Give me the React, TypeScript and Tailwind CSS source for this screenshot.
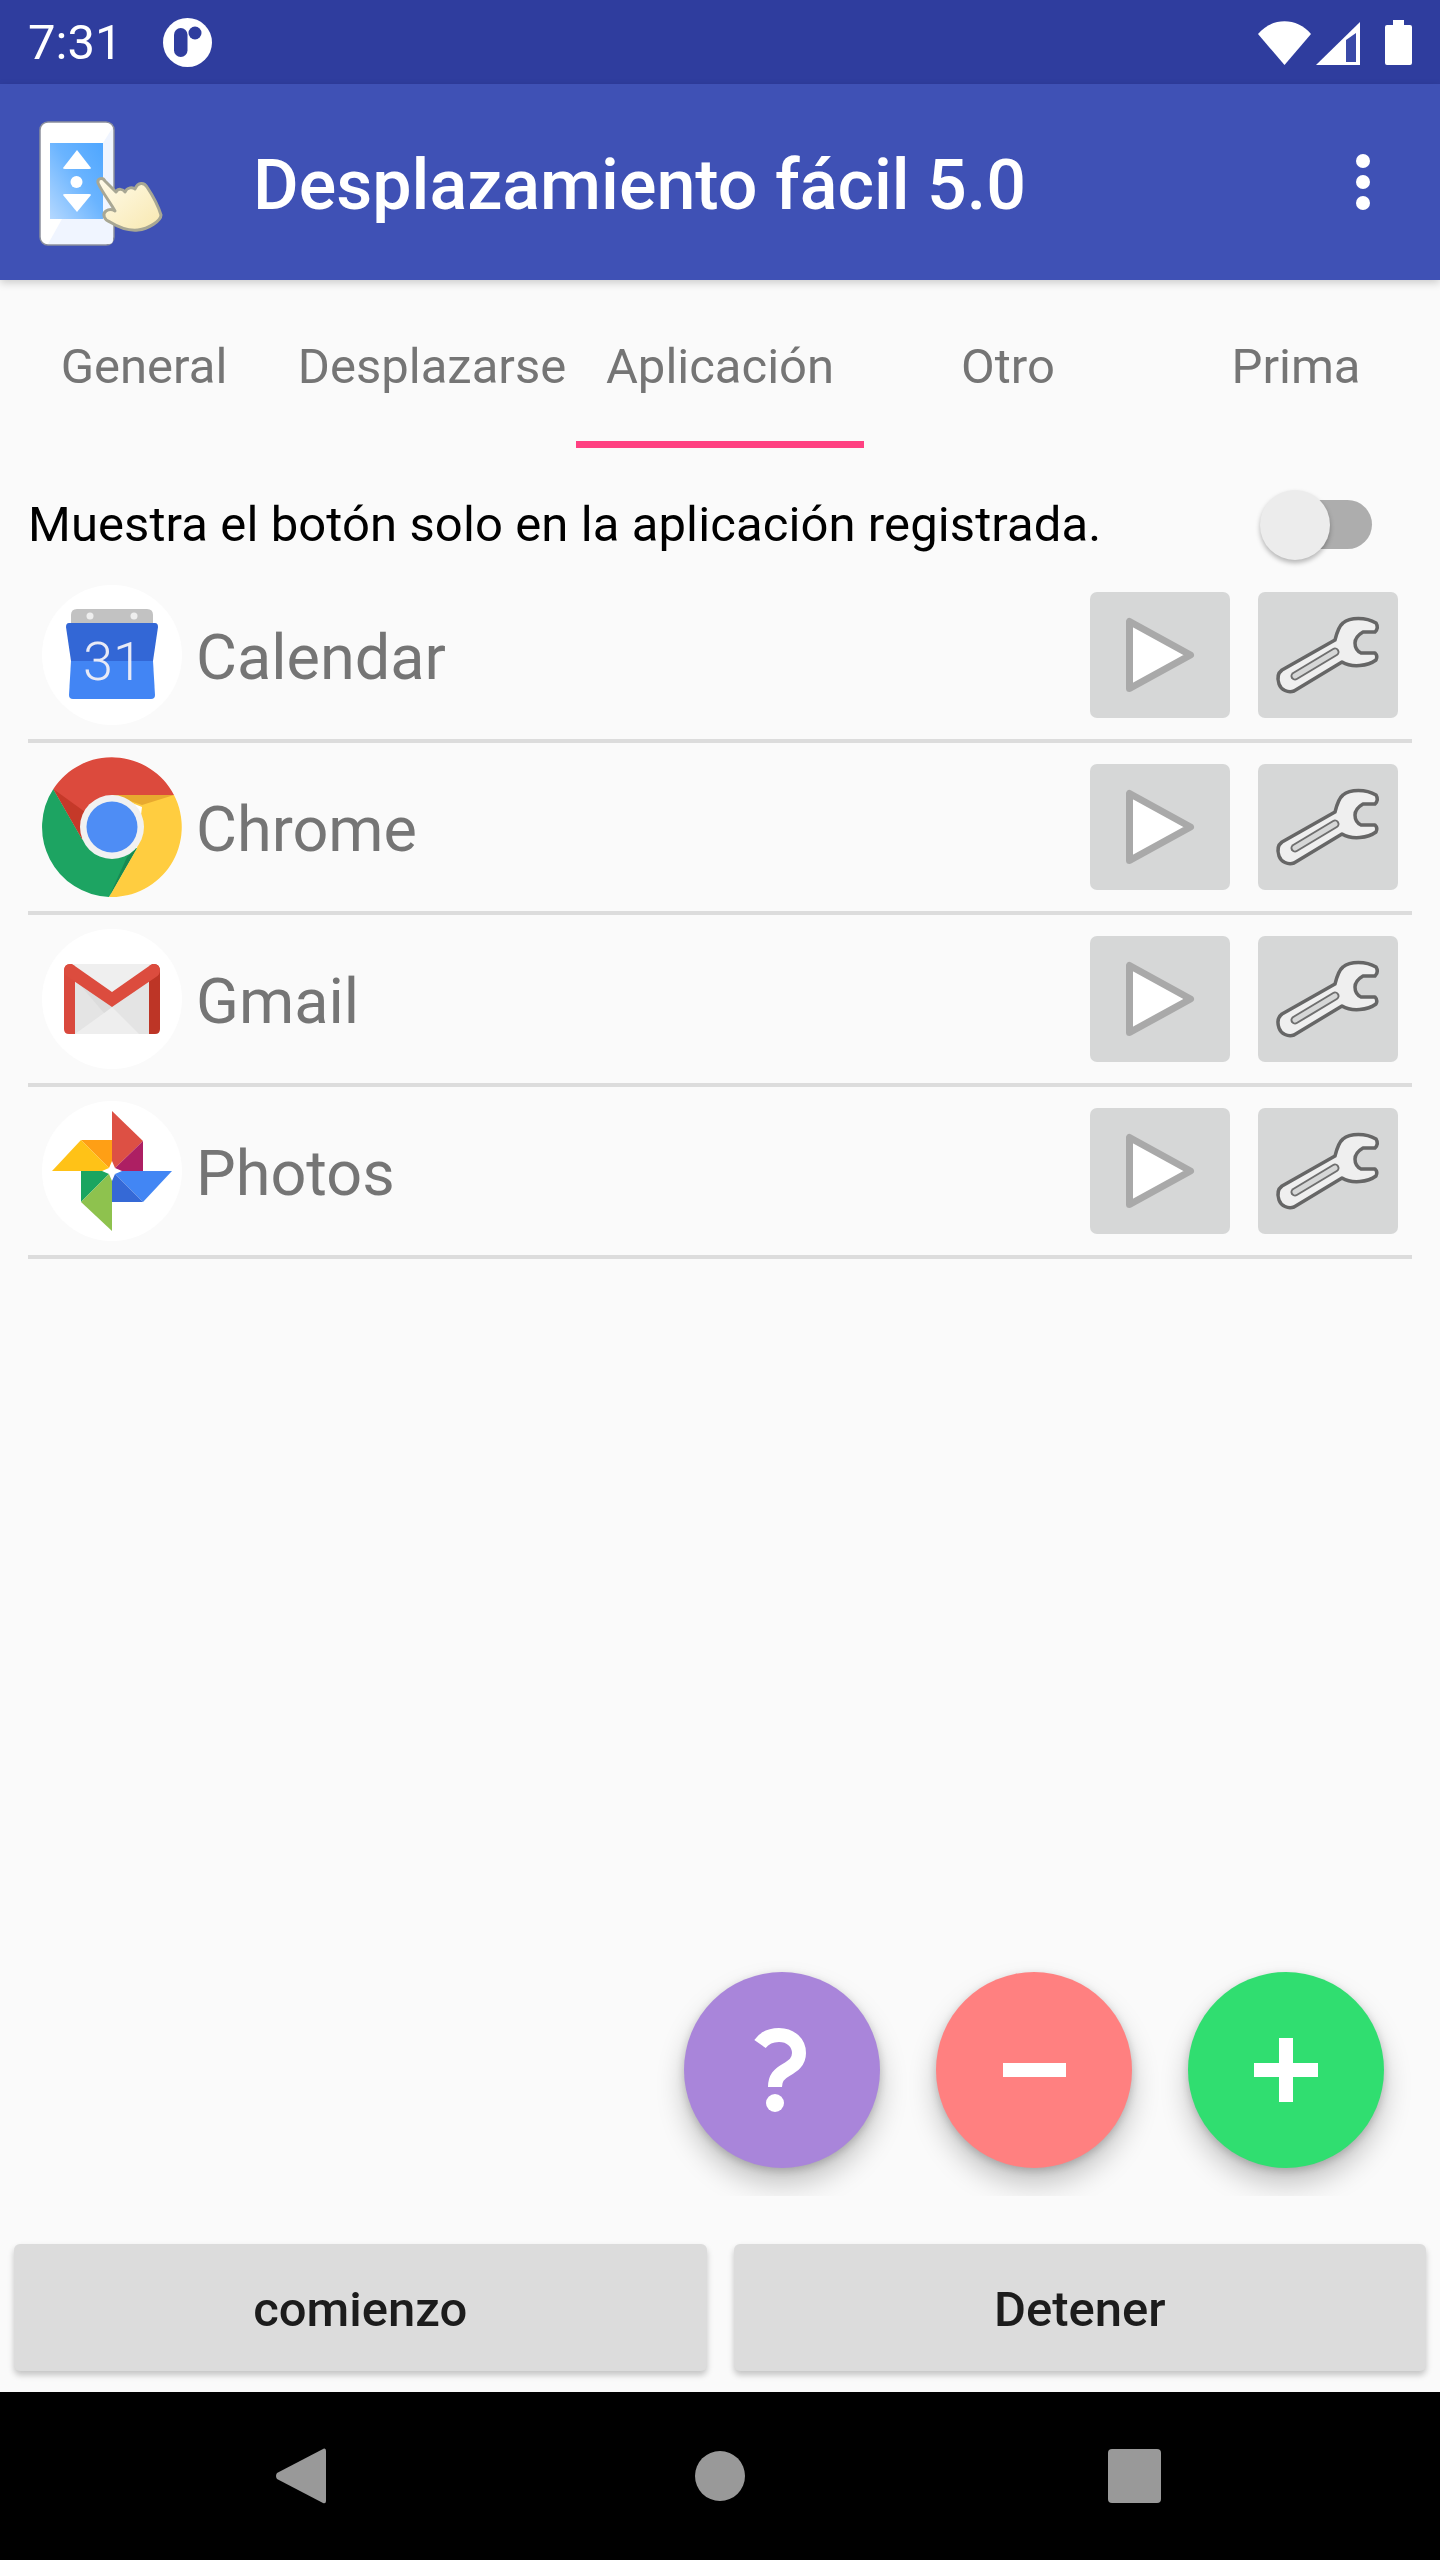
import React from "react";

function AppIcon() {
  return (
    <svg width="140" height="140" viewBox="0 0 140 140">
      <defs>
        <linearGradient id="scr" x1="0" y1="1" x2="1" y2="0">
          <stop offset="0" stopColor="#b4d8ff" />
          <stop offset="0.55" stopColor="#6ab4ff" />
          <stop offset="1" stopColor="#4ea6ff" />
        </linearGradient>
        <linearGradient id="hnd" x1="0" y1="0" x2="1" y2="1">
          <stop offset="0" stopColor="#fffbea" />
          <stop offset="1" stopColor="#f8e8b0" />
        </linearGradient>
      </defs>
      <rect x="10" y="10" width="74" height="123" rx="8" fill="#fff" stroke="#8b8f9c" strokeWidth="1.5" />
      <path d="M83 15 L83 128 Q83 132 79 132 L18 132 L32 107 L73 107 L73 31 Z" fill="#f0f5ff" />
      <rect x="20" y="31" width="53" height="76" fill="url(#scr)" />
      <path d="M47 38 L61 56 Q61 57 59 57 L35 57 Q33 57 33 56 Z" fill="#fff" />
      <circle cx="46.5" cy="70" r="6" fill="#fff" />
      <path d="M35 82 L59 82 Q61 82 61 83 L47 100 L33 83 Q33 82 35 82 Z" fill="#fff" />
      <path
        d="M68 71 C67 66 73 65 75 69 L86 80 C88 76 93 77 95 80 C97 75 103 75 105 77 C108 70 114 70 117 75 C123 84 128 93 131 103 C131 109 118 117 108 118 C98 119 88 115 80 110 C74 108 72 102 76 99 C79 97 82 97 85 99 C80 90 72 80 68 71 Z"
        fill="url(#hnd)"
        stroke="#a8a794"
        strokeWidth="3"
        strokeLinejoin="round"
      />
    </svg>
  );
}

function CalendarIcon() {
  return (
    <svg width="140" height="140" viewBox="0 0 140 140">
      <path d="M29 40 V30 Q29 24 35 24 H105 Q111 24 111 30 V40 Z" fill="#c2c2c2" />
      <circle cx="48" cy="31" r="3.5" fill="#eeeeee" />
      <circle cx="92" cy="31" r="3.5" fill="#eeeeee" />
      <path d="M27 38 H113 Q116 38 116 42 L111 76 H29 L24 42 Q24 38 27 38 Z" fill="#3367d6" />
      <path d="M29 76 H111 L113 110 Q113 114 109 114 H31 Q27 114 27 110 Z" fill="#4285f4" />
      <text x="71" y="95" textAnchor="middle" fontSize="54" fontWeight="300" fill="#e8eaf6" fontFamily="Roboto, sans-serif">31</text>
    </svg>
  );
}

function ChromeIcon() {
  return (
    <svg width="140" height="140" viewBox="0 0 140 140">
      <path d="M11.3 32 A70 70 0 0 1 132 38 L70 38 L40 82 Z" fill="#dc4a3d" />
      <path d="M11.3 32 L40 82 L95 91 L67 140 A70 70 0 0 1 11.3 32 Z" fill="#1da462" />
      <path d="M132 38 A70 70 0 0 1 67 140 L95 91 L100 50 L70 38 Z" fill="#ffcd40" />
      <path d="M70 38 L132 38 L100 48 Z" fill="#e8a92f" />
      <path d="M11.3 32 L40 82 L50 60 Z" fill="#c53929" />
      <path d="M95 91 L67 140 L85 100 Z" fill="#178a52" />
      <circle cx="70" cy="70" r="32" fill="#f1f1f1" />
      <circle cx="70" cy="70" r="25.5" fill="#4e8df5" />
    </svg>
  );
}

function GmailIcon() {
  return (
    <svg width="140" height="140" viewBox="0 0 140 140">
      <path d="M26 35 H114 L107 105 H33 Z" fill="#efefef" />
      <path d="M33 44 L70 78 L107 44 V105 H33 Z" fill="#e4e4e4" />
      <path d="M33 105 L62 84 L70 78 L78 86 L97 105 Z" fill="#eeeeee" />
      <path d="M33 50 L62 84 L70 78 Z" fill="#dcdcdc" />
      <path d="M22 42 Q22 35 28 35 L33 37 V105 H27 Q22 105 22 100 Z" fill="#d9493d" />
      <path d="M118 42 Q118 35 112 35 L107 37 V105 H113 Q118 105 118 100 Z" fill="#bd3526" />
      <path d="M22 41 Q23 34 30 35 L70 63 L110 35 Q117 34 118 41 Q118 46 114 48 L70 78 L26 48 Q22 46 22 41 Z" fill="#dc4c3e" />
    </svg>
  );
}

function PhotosIcon() {
  return (
    <svg width="140" height="140" viewBox="0 0 140 140">
      <path d="M70 10 L101 40 L70 70 Z" fill="#dd5044" />
      <path d="M101 40 V70 H70 Z" fill="#ad1f63" />
      <path d="M130 70 L101 101 L70 70 Z" fill="#4286f4" />
      <path d="M70 70 L101 101 H70 Z" fill="#3569d6" />
      <path d="M70 70 L39 70 V101 Z" fill="#1ba560" />
      <path d="M70 70 L39 101 L70 130 Z" fill="#8ec24e" />
      <path d="M70 70 V39 H39 Z" fill="#ff9f15" />
      <path d="M70 70 L39 39 L10 70 Z" fill="#ffc217" />
      <path d="M70 60 L73 67 L80 70 L73 73 L70 80 L67 73 L60 70 L67 67 Z" fill="#ffffff" />
    </svg>
  );
}

function PlayBtn() {
  return (
    <div className="w-[140px] h-[126px] rounded-[7px] bg-[#d6d7d7]">
      <svg width="140" height="126" viewBox="0 0 140 126">
        <path d="M39.5 29.5 L39.5 96.5 L100.5 63 Z" fill="#fff" stroke="#a9a9a9" strokeWidth="7" strokeLinejoin="round" />
      </svg>
    </div>
  );
}

function WrenchBtn() {
  return (
    <div className="w-[140px] h-[126px] rounded-[7px] bg-[#d6d7d7]">
      <svg width="140" height="126" viewBox="0 0 140 126">
        <path
          d="M24 78 L77 48 C79 40 81 34 85 31 C92 25 108 25 118 31 Q121 36 117 40 L105 40 C100 43 97 47 97 51 C97 55 99 59 103 61 L117 61 Q120 64 118 68 C110 74 94 76 84 70 L36 99 C30 101 23 98 21 92 C19 86 20 81 24 78 Z"
          fill="#efefef"
          stroke="#666666"
          strokeWidth="3.5"
          strokeLinejoin="round"
        />
        <path d="M37 84 L77 60" stroke="#6f6f6f" strokeWidth="9" strokeLinecap="round" />
        <path d="M37 84 L77 60" stroke="#d6d7d7" strokeWidth="5" strokeLinecap="round" />
      </svg>
    </div>
  );
}

function Row({ name, icon }: { name: string; icon: React.ReactNode }) {
  return (
    <div className="mx-[28px] h-[172px] border-b-4 border-[#dcdcdc] flex items-center pl-[14px] pr-[14px]">
      <div className="w-[140px] h-[140px] rounded-full bg-white shrink-0">{icon}</div>
      <div className="ml-[14px] pt-[6px] text-[63px] text-[#757575] flex-1">{name}</div>
      <PlayBtn />
      <div className="w-[28px]" />
      <WrenchBtn />
    </div>
  );
}

function Fab({ color, children }: { color: string; children: React.ReactNode }) {
  return (
    <div className={`w-[196px] h-[196px] rounded-full flex items-center justify-center shadow-[0_16px_28px_rgba(0,0,0,0.22),0_3px_8px_rgba(0,0,0,0.18)] ${color}`}>
      {children}
    </div>
  );
}

export default function App() {
  return (
    <div className="w-[1440px] h-[2560px] flex flex-col overflow-hidden bg-[#fafafa] font-[Roboto,sans-serif]">
      <div className="h-[84px] shrink-0 bg-[#2f3d9e] flex items-center pl-[28px] pr-[28px] text-white">
        <span className="text-[49px] leading-none">7:31</span>
        <svg className="ml-[41px]" width="49" height="49" viewBox="0 0 49 49">
          <circle cx="24.5" cy="24.5" r="24.5" fill="#fff" />
          <rect x="11" y="10" width="13.5" height="29" rx="6.75" fill="#2f3d9e" />
          <circle cx="32" cy="15" r="6.5" fill="#2f3d9e" />
        </svg>
        <div className="ml-auto flex items-end">
          <svg width="53" height="44" viewBox="0 0 53 44">
            <path d="M0 13 C14 -4 39 -4 53 13 L26.5 44 Z" fill="#fff" />
          </svg>
          <svg className="ml-[5px]" width="44" height="43" viewBox="0 0 44 43">
            <path d="M44 0 V43 H0 Z" fill="#fff" />
            <path d="M30 18 L40 11 V40 H30 Z" fill="#3a4aa8" />
          </svg>
          <svg className="ml-[25px]" width="27" height="45" viewBox="0 0 27 45">
            <path d="M8 0 H19 V5 H25 Q27 5 27 7 V43 Q27 45 25 45 H2 Q0 45 0 43 V7 Q0 5 2 5 H8 Z" fill="#fff" />
          </svg>
        </div>
      </div>

      <div className="relative z-10 h-[196px] shrink-0 bg-[#3f51b5] flex items-center pl-[30px] pr-[70px] shadow-[0_3px_8px_rgba(0,0,0,0.18)]">
        <AppIcon />
        <div className="ml-[83px] pt-[6px] text-[70px] font-medium text-white leading-none">Desplazamiento fácil 5.0</div>
        <div className="ml-auto flex flex-col gap-[7px]">
          <div className="w-[14px] h-[14px] rounded-full bg-white" />
          <div className="w-[14px] h-[14px] rounded-full bg-white" />
          <div className="w-[14px] h-[14px] rounded-full bg-white" />
        </div>
      </div>

      <div className="grid grid-cols-5 h-[168px] shrink-0">
        {["General", "Desplazarse", "Aplicación", "Otro", "Prima"].map((t) => (
          <div key={t} className={`flex items-center justify-center pt-[12px] text-[49px] text-[#757575] whitespace-nowrap ${t === "Aplicación" ? "border-b-[7px] border-[#ff4081]" : "pb-[7px]"}`}>
            {t}
          </div>
        ))}
      </div>

      <div className="h-[123px] shrink-0 flex items-center pt-[30px] pl-[28px] pr-[68px]">
        <div className="text-[49px] tracking-[0.1px] text-black flex-1 whitespace-nowrap">Muestra el botón solo en la aplicación registrada.</div>
        <div className="relative w-[112px] h-[70px] flex items-center justify-end">
          <div className="w-[90px] h-[49px] rounded-full bg-[#adadad]" />
          <div className="absolute left-0 top-0 w-[70px] h-[70px] rounded-full bg-[#ececec] shadow-[0_3px_5px_rgba(0,0,0,0.28)]" />
        </div>
      </div>

      <Row name="Calendar" icon={<CalendarIcon />} />
      <Row name="Chrome" icon={<ChromeIcon />} />
      <Row name="Gmail" icon={<GmailIcon />} />
      <Row name="Photos" icon={<PhotosIcon />} />

      <div className="mt-auto h-[246px] shrink-0 overflow-hidden flex justify-end gap-[56px] pt-[22px] pr-[56px]">
        <Fab color="bg-[#a985da]">
          <svg width="53" height="84" viewBox="0 0 53 84" className="-ml-[5px]">
            <path d="M7 16 C12 9 18 7 26 7 C38 7 46 15 46 25 C46 34 40 38 33 42 C26 46 22 50 22 59" fill="none" stroke="#fff" strokeWidth="14" strokeLinejoin="round" />
            <circle cx="22" cy="75" r="9" fill="#fff" />
          </svg>
        </Fab>
        <Fab color="bg-[#ff8080]">
          <div className="w-[63px] h-[14px] bg-white" />
        </Fab>
        <Fab color="bg-[#30de70]">
          <svg width="64" height="64" viewBox="0 0 64 64">
            <path d="M25 0 H39 V25 H64 V39 H39 V64 H25 V39 H0 V25 H25 Z" fill="#fff" />
          </svg>
        </Fab>
      </div>

      <div className="h-[196px] shrink-0 pt-[48px] pl-[14px] pr-[14px] grid grid-cols-2 gap-[27px] items-start">
        <div className="h-[127px] pt-[4px] rounded-[6px] bg-[#dcdcdc] flex items-center justify-center text-[49px] font-medium text-[#1c1c1c] shadow-[0_4px_6px_rgba(0,0,0,0.22)]">comienzo</div>
        <div className="h-[127px] pt-[4px] rounded-[6px] bg-[#dcdcdc] flex items-center justify-center text-[49px] font-medium text-[#1c1c1c] shadow-[0_4px_6px_rgba(0,0,0,0.22)]">Detener</div>
      </div>

      <div className="h-[168px] shrink-0 bg-black flex items-center pl-[275px]">
        <svg width="51" height="56" viewBox="0 0 51 56">
          <path d="M49 0.5 Q51 0 51 3 V53 Q51 56 48 55 L2 31 Q0 28 2 25 Z" fill="#999" />
        </svg>
        <div className="ml-[369px] w-[50px] h-[50px] rounded-full bg-[#999]" />
        <div className="ml-[363px] w-[53px] h-[54px] rounded-[4px] bg-[#999]" />
      </div>
    </div>
  );
}
